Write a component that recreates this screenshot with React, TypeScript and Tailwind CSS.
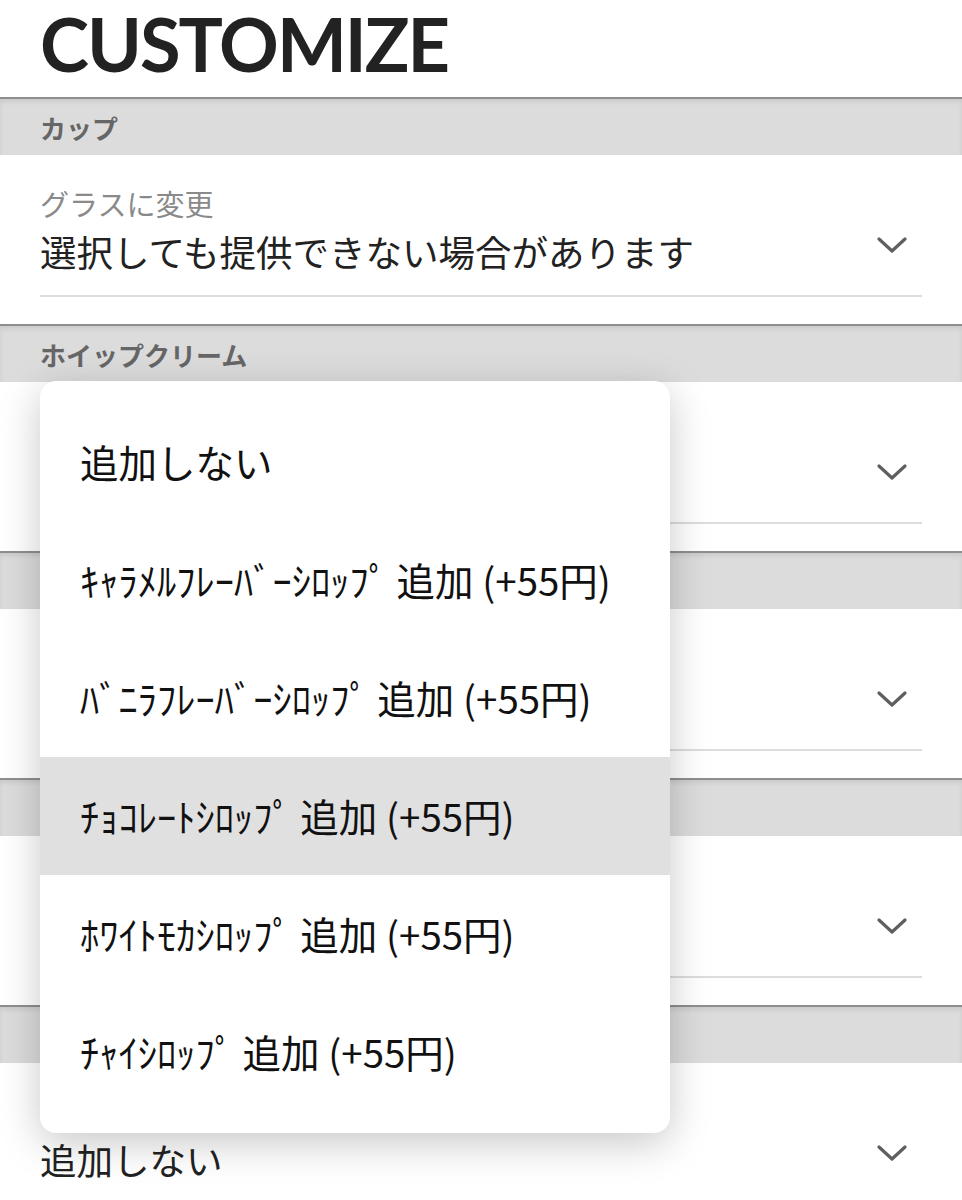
import React from "react";

const jp = { fontFamily: '"Noto Sans CJK JP", "Noto Sans", sans-serif' };

const sections = [
  { title: "カップ", label: "グラスに変更", value: "選択しても提供できない場合があります" },
  { title: "ホイップクリーム", label: "ホイップクリーム", value: "通常" },
  { title: "シロップ", label: "シロップ", value: "追加しない" },
  { title: "ソース", label: "ソース", value: "追加しない" },
  { title: "シロップ", label: "シロップ追加", value: "追加しない" },
];

const options = [
  "追加しない",
  "ｷｬﾗﾒﾙﾌﾚｰﾊﾞｰｼﾛｯﾌﾟ 追加 (+55円)",
  "ﾊﾞﾆﾗﾌﾚｰﾊﾞｰｼﾛｯﾌﾟ 追加 (+55円)",
  "ﾁｮｺﾚｰﾄｼﾛｯﾌﾟ 追加 (+55円)",
  "ﾎﾜｲﾄﾓｶｼﾛｯﾌﾟ 追加 (+55円)",
  "ﾁｬｲｼﾛｯﾌﾟ 追加 (+55円)",
];

const Chevron = () => (
  <svg width="30" height="16" viewBox="0 0 30 16" className="mt-[8px] mr-[15px] shrink-0">
    <path d="M2 2 L15 14 L28 2" fill="none" stroke="#5f5f5f" strokeWidth="3.2" strokeLinecap="round" strokeLinejoin="round" />
  </svg>
);

const Section = ({ title, label, value }: { title: string; label: string; value: string }) => (
  <section>
    <div className="flex h-[58px] items-center border-t-2 border-[#8e8e8e] bg-[#dcdcdc] px-[40px] shadow-[inset_0_3px_4px_rgba(0,0,0,0.08)]">
      <span className="text-[26px] font-bold text-[#666666]">{title}</span>
    </div>
    <div className="h-[169px] px-[40px] pt-[30px]">
      <div className="border-b-2 border-[#dddddd] pb-[20px]">
        <div className="text-[29px] leading-[36px] text-[#8a8a8a]">{label}</div>
        <div className="mt-[8px] flex items-start justify-between">
          <span className="text-[36.5px] leading-[46px] text-[#222222]">{value}</span>
          <Chevron />
        </div>
      </div>
    </div>
  </section>
);

const Dropdown = ({ selected }: { selected: number }) => (
  <div className="absolute left-[40px] top-[381px] w-[630px] overflow-hidden rounded-[16px] bg-white py-[22px] shadow-[0_10px_40px_rgba(0,0,0,0.22)]">
    {options.map((o, i) => (
      <div
        key={o}
        className={
          i === selected
            ? "flex h-[118px] items-center bg-[#e0e0e0] pl-[40px] text-[38.5px] text-[#111111]"
            : "flex h-[118px] items-center pl-[40px] text-[38.5px] text-[#111111]"
        }
      >
        {o}
      </div>
    ))}
  </div>
);

export default function App() {
  return (
    <div className="relative h-[1200px] w-[962px] overflow-hidden bg-white" style={jp}>
      <div className="flex h-[97px] items-start pl-[40px]">
        <h1
          className="mt-[4px] text-[74px] font-bold leading-[80px] tracking-[-2px] text-[#222222]"
          style={{ fontFamily: '"Lato", "Liberation Sans", sans-serif' }}
        >
          CUSTOMIZE
        </h1>
      </div>
      {sections.map((s, i) => (
        <Section key={i} {...s} />
      ))}
      <Dropdown selected={3} />
    </div>
  );
}
